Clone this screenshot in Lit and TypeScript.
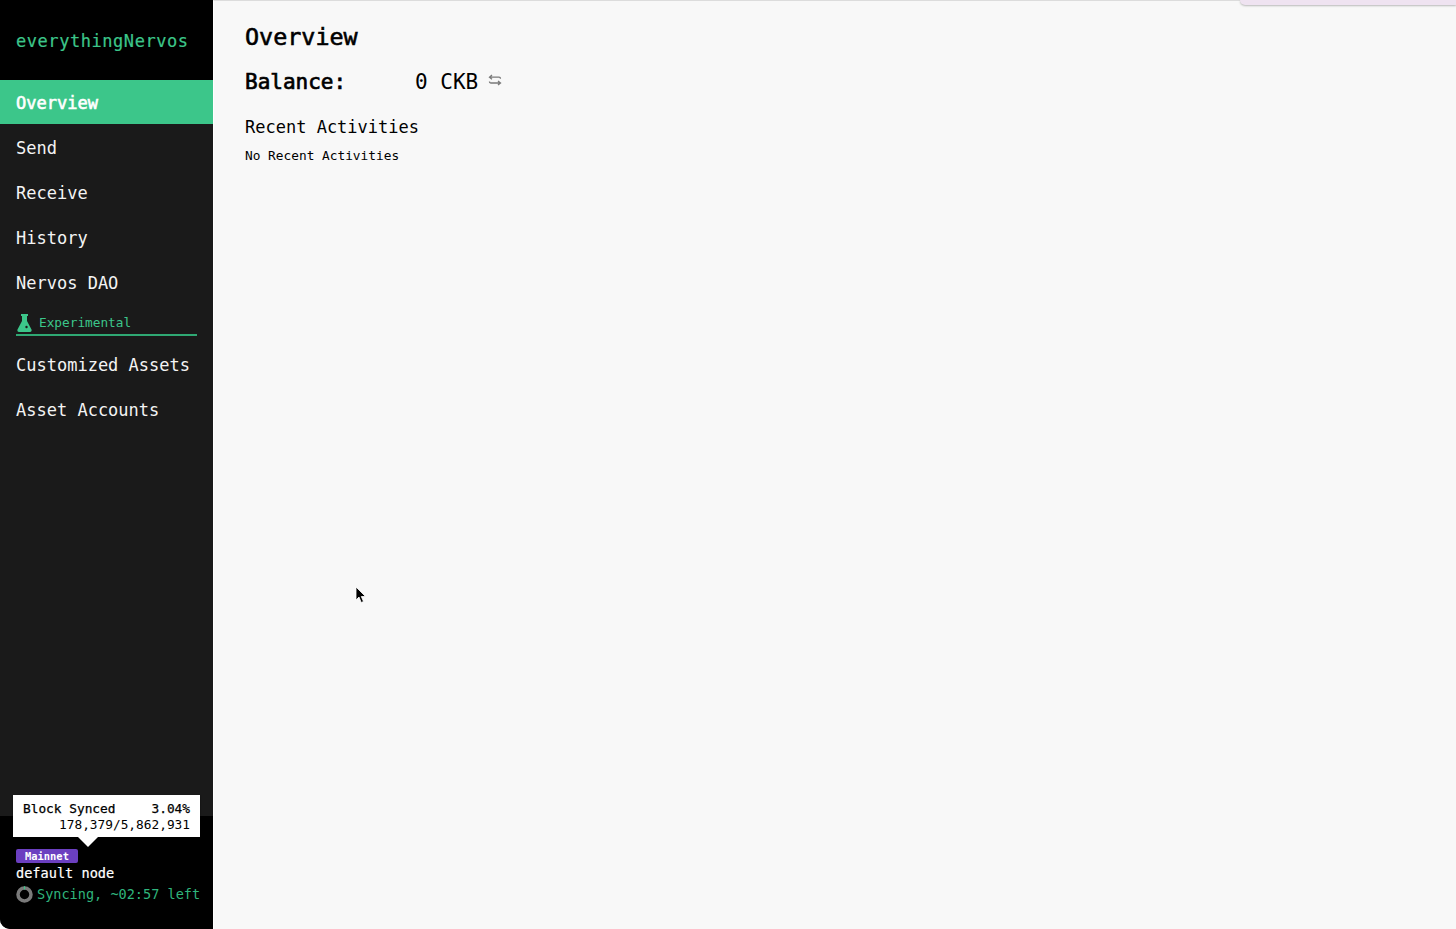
import { LitElement, html, css } from "lit";
import { customElement } from "lit/decorators.js";

@customElement("app-root")
export class AppRoot extends LitElement {
  static styles = css`
    :host { display: block; width: 1456px; height: 929px; font-family: "DejaVu Sans Mono", "Liberation Mono", monospace; background: #fff; position: relative; overflow: hidden; }
    .app { display: flex; height: 929px; }
    .side { width: 213px; flex: none; display: flex; flex-direction: column; background: #1a1a1a; border-bottom-left-radius: 10px; overflow: hidden; }
    .logo { height: 80px; flex: none; background: #000; color: #3cc68a; font-size: 17px; letter-spacing: .55px; padding: 1px 16px 0; display: flex; align-items: center; box-sizing: border-box; -webkit-text-stroke: .2px #3cc68a; }
    .nav { height: 45px; flex: none; padding: 0 16px; display: flex; align-items: center; color: #f4f4f4; font-size: 17px; box-sizing: border-box; }
    .nav.active { height: 44px; background: #3cc68a; color: #fff; -webkit-text-stroke: .6px #fff; margin-bottom: 1px; padding: 2px 16px 0; }
    .exp { margin: 0 16px 6px; height: 31px; border-bottom: 2px solid #2fa873; display: flex; align-items: center; gap: 7px; color: #3cc68a; font-size: 12.75px; padding: 6px 0 0 1px; box-sizing: border-box; }
    .spacer { flex: 1; }
    .foot { position: relative; height: 113px; flex: none; background: #000; padding: 33px 0 0 16px; box-sizing: border-box; }
    .tip { position: absolute; left: 13px; top: -21px; width: 187px; height: 42px; background: #fff; box-shadow: 0 1px 2px rgba(0,0,0,.4); color: #000; font-size: 12.8px; padding: 6px 10px 0 10px; box-sizing: border-box; line-height: 16px; }
    .tip::after { content: ""; position: absolute; left: 65px; top: 42px; border: 10px solid transparent; border-top-color: #fff; border-bottom-width: 0; }
    .row { display: flex; justify-content: space-between; -webkit-text-stroke: .25px #000; }
    .right { text-align: right; }
    .badge { display: block; width: 62px; height: 14px; background: #6b3fc0; border-radius: 2px; color: #fff; font-size: 10.4px; font-weight: 700; line-height: 15px; text-align: center; }
    .node { color: #fff; font-size: 13.6px; line-height: 18px; margin-top: 1px; height: 18px; -webkit-text-stroke: .2px #fff; }
    .sync { display: flex; align-items: center; gap: 4px; color: #2fb57c; font-size: 13.55px; line-height: 20px; margin-top: 2px; white-space: nowrap; }
    .main { flex: 1; background: #f8f8f8; border-left: 1px solid #fff; border-top: 1px solid #dcdcdc; padding: 22px 0 0 31px; color: #000; box-sizing: border-box; }
    h1 { margin: 0; font-size: 23.4px; font-weight: 400; line-height: 28px; -webkit-text-stroke: .6px #000; }
    .bal { display: flex; align-items: center; font-size: 21px; height: 28px; margin-top: 17px; }
    .bal b { width: 170px; font-weight: 400; -webkit-text-stroke: .7px #000; }
    .bal svg { margin: -4px 0 0 10px; }
    h2 { margin: 21px 0 0; font-size: 17px; font-weight: 400; line-height: 20px; }
    p { margin: 10px 0 0; font-size: 12.8px; line-height: 18px; }
    .notice { position: absolute; right: 0; top: 0; width: 216px; height: 5px; background: #efe3f1; border-bottom-left-radius: 8px; box-shadow: 0 1px 2px rgba(0,0,0,.25); }
    .cursor { position: absolute; left: 355px; top: 586px; }
  `;

  render() {
    return html`
      <div class="app">
        <aside class="side">
          <div class="logo">everythingNervos</div>
          <div class="nav active">Overview</div>
          <div class="nav">Send</div>
          <div class="nav">Receive</div>
          <div class="nav">History</div>
          <div class="nav">Nervos DAO</div>
          <div class="exp">
            <svg width="15" height="18" viewBox="0 0 15 18">
              <path fill="#3cc68a" d="M4 0h7v2h-1v5l4.500 8.500c.5 1-.2 2.500-1.500 2.500H2c-1.300 0-2-1.500-1.500-2.500L5 7V2H4z"/>
              <circle cx="9.500" cy="13" r="1.200" fill="#1a1a1a"/>
            </svg>
            <span>Experimental</span>
          </div>
          <div class="nav">Customized Assets</div>
          <div class="nav">Asset Accounts</div>
          <div class="spacer"></div>
          <div class="foot">
            <div class="tip">
              <div class="row"><span>Block Synced</span><span>3.04%</span></div>
              <div class="right">178,379/5,862,931</div>
            </div>
            <span class="badge">Mainnet</span>
            <div class="node">default node</div>
            <div class="sync">
              <svg width="17" height="17" viewBox="0 0 17 17">
                <circle cx="8.500" cy="8.500" r="6.500" fill="none" stroke="#7a7a7a" stroke-width="3.500"/>
                <path d="M8.500 .2v3.200" stroke="#3cc68a" stroke-width="1.200"/>
              </svg>
              <span>Syncing, ~02:57 left</span>
            </div>
          </div>
        </aside>
        <main class="main">
          <h1>Overview</h1>
          <div class="bal">
            <b>Balance:</b><span>0 CKB</span>
            <svg width="14" height="12" viewBox="0 0 14 12" fill="none" stroke="#7a7a7a" stroke-width="1.300">
              <path d="M4 1 1.500 3.200 4 5.200M1.500 3.200H11c1 0 1.500.6 1.500 1.600"/>
              <path d="M10 7 12.500 9 10 11M12.500 9H3c-1 0-1.500-.6-1.500-1.600"/>
            </svg>
          </div>
          <h2>Recent Activities</h2>
          <p>No Recent Activities</p>
        </main>
      </div>
      <div class="notice"></div>
      <svg class="cursor" width="12" height="19" viewBox="0 0 12 19">
        <path d="M1 1v13l3-3 2.200 5.500 2.300-1L6.300 10.500H10.500z" fill="#000" stroke="#fff" stroke-width=".8"/>
      </svg>
    `;
  }
}
